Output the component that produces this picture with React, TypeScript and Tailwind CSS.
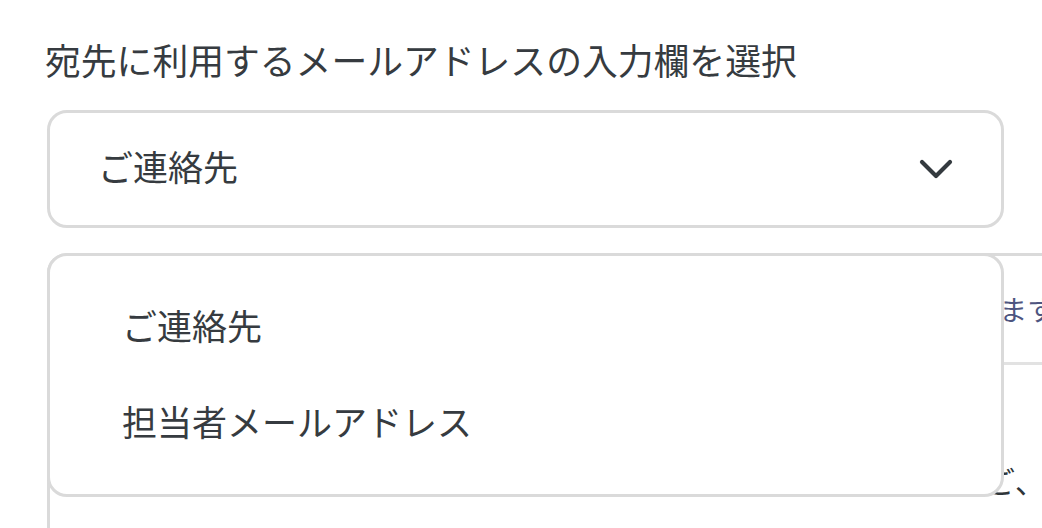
import React from "react";

export default function App() {
  return (
    <div className="relative h-[528px] w-[1042px] overflow-hidden bg-white pl-[47px] pt-[32px] font-['Noto_Sans_CJK_JP',sans-serif] text-[#363b40]">
      <p className="ml-[-2px] whitespace-nowrap text-[35.8px] leading-[54px]">
        宛先に利用するメールアドレスの入力欄を選択
      </p>

      <div className="relative z-10 mt-[24px] w-[957px]">
        <button
          type="button"
          className="flex h-[118px] w-full items-center justify-between rounded-[20px] border-[3px] border-[#dadada] bg-white pl-[48px] pr-[47px] text-left"
        >
          <span className="mb-[8px] text-[35px] leading-none">ご連絡先</span>
          <svg width="36" height="24" viewBox="0 0 36 24" fill="none" className="mt-[1px]">
            <polyline
              points="4,4 18,18 32,4"
              stroke="#343a3f"
              strokeWidth="4.2"
              strokeLinecap="round"
              strokeLinejoin="round"
            />
          </svg>
        </button>

        <div className="absolute left-0 top-[143px] w-full rounded-[20px] border-[3px] border-[#dadada] bg-white py-[23px]">
          <div className="flex h-[96px] items-center pb-[6px] pl-[72px] text-[35px] leading-none">ご連絡先</div>
          <div className="flex h-[96px] items-center pb-[6px] pl-[72px] text-[35px] leading-none">担当者メールアドレス</div>
        </div>
      </div>

      <div className="mt-[25px] w-[1300px] rounded-[20px] border-[3px] border-[#dadada]">
        <div className="flex h-[106px] items-center pl-[502px]">
          <span className="whitespace-nowrap text-[28px] leading-none text-[#4e5580]">
            メールアドレスを宛先として利用します
          </span>
        </div>
        <div className="h-[3px] bg-[#e2e2e2]" />
        <div className="flex h-[230px] items-start pl-[485px] pt-[100px]">
          <span className="whitespace-nowrap text-[30px] leading-none text-[#2f3539]">
            登録した内容は確認画面で変更でご、確認ください
          </span>
        </div>
      </div>
    </div>
  );
}
